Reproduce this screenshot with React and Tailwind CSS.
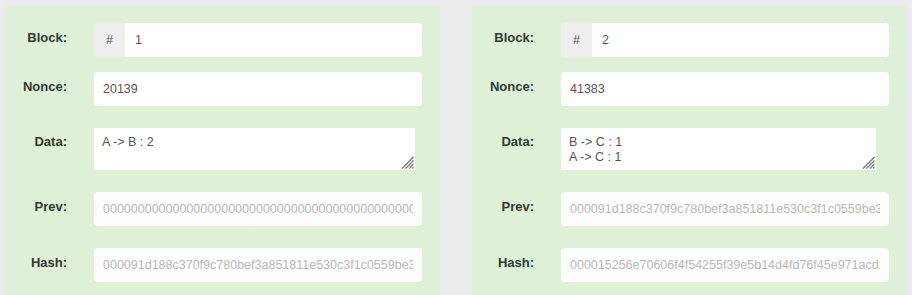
import React from 'react';

const blocks = [
  {
    id: 1,
    nonce: '20139',
    data: ['A -> B : 2'],
    prev: '0000000000000000000000000000000000000000000000000000000000000000',
    hash: '000091d188c370f9c780bef3a851811e530c3f1c0559be3a8d1f2e4c6b7a9012',
    areaW: 'w-[321px]',
  },
  {
    id: 2,
    nonce: '41383',
    data: ['B -> C : 1', 'A -> C : 1'],
    prev: '000091d188c370f9c780bef3a851811e530c3f1c0559be3a8d1f2e4c6b7a9012',
    hash: '000015256e70606f4f54255f39e5b14d4fd76f45e971acd2b8e3f0a1c9d47e65',
    areaW: 'w-[315px]',
  },
];

const Label = ({ children, top = 'pt-[5px]' }) => (
  <div className={`w-[62px] shrink-0 text-right ${top} text-[13px] leading-[20px] font-bold text-[#2f3a2f]`}>
    {children}
  </div>
);

const ResizeGrip = () => (
  <svg className="absolute right-[1px] bottom-[1px]" width="13" height="13" viewBox="0 0 13 13">
    <g stroke="#6f6f6f" strokeWidth="1.1">
      <line x1="12.5" y1="1" x2="1" y2="12.5" />
      <line x1="12.5" y1="4.5" x2="4.5" y2="12.5" />
      <line x1="12.5" y1="8" x2="8" y2="12.5" />
      <line x1="12.5" y1="11" x2="11" y2="12.5" />
    </g>
  </svg>
);

const HashField = ({ value }) => (
  <input
    type="text"
    readOnly
    value={value}
    className="ml-[27px] flex-1 min-w-0 h-[34px] bg-[#fdfdfd] rounded-[4px] px-[9px] text-[12.5px] text-[#b9b9b9] outline-none"
  />
);

const Block = ({ block }) => (
  <div className="w-[437px] h-[310px] bg-[#dff0d8] border border-[#e4eee0] rounded-[4px] pt-[17px] pr-[18px]">
    <div className="flex items-start">
      <Label>Block:</Label>
      <div className="ml-[27px] flex-1 flex h-[34px]">
        <div className="w-[31px] bg-[#eeeeee] rounded-l-[4px] flex items-center justify-center text-[12.5px] text-[#555]">#</div>
        <div className="flex-1 bg-white rounded-r-[4px] flex items-center px-[10px] text-[12.5px] text-[#555]">{block.id}</div>
      </div>
    </div>

    <div className="flex items-start mt-[15px]">
      <Label>Nonce:</Label>
      <div className="ml-[27px] flex-1 h-[34px] bg-white rounded-[4px] flex items-center px-[9px] text-[12.5px] text-[#555]">
        {block.nonce}
      </div>
    </div>

    <div className="flex items-start mt-[22px]">
      <Label top="pt-[4px]">Data:</Label>
      <div className={`ml-[27px] ${block.areaW} h-[42px] bg-white relative pt-[7px] pl-[8px] text-[12.5px] leading-[15px] text-[#555]`}>
        {block.data.map((line) => (
          <div key={line}>{line}</div>
        ))}
        <ResizeGrip />
      </div>
    </div>

    <div className="flex items-start mt-[22px]">
      <Label>Prev:</Label>
      <HashField value={block.prev} />
    </div>

    <div className="flex items-start mt-[22px]">
      <Label>Hash:</Label>
      <HashField value={block.hash} />
    </div>
  </div>
);

export default function App() {
  return (
    <div className="w-[912px] h-[295px] overflow-hidden bg-[#ebebef] font-['Liberation_Sans',Arial,sans-serif]">
      <div className="flex gap-[30px] pl-[4px] pt-[5px]">
        {blocks.map((b) => (
          <Block key={b.id} block={b} />
        ))}
      </div>
    </div>
  );
}
